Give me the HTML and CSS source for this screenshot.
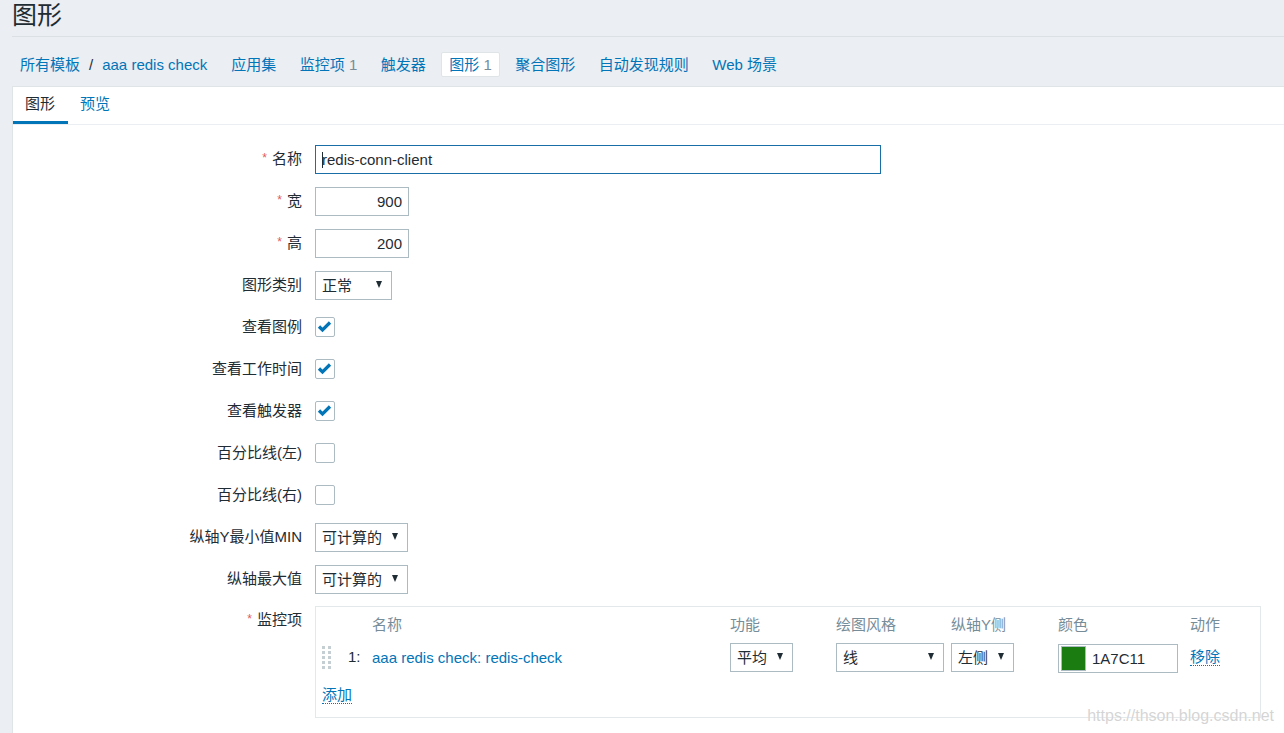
FILE: index.html
```html
<!DOCTYPE html>
<html lang="zh">
<head>
<meta charset="utf-8">
<title>图形</title>
<link rel="stylesheet" href="styles.css">
</head>
<body>
<header class="page-title"><h1>图形</h1></header>
<nav class="subnav">
  <span class="nav-item crumbs"><a>所有模板</a><span class="sep">/</span><a>aaa redis check</a></span>
  <a class="nav-item">应用集</a>
  <a class="nav-item">监控项 <span class="count">1</span></a>
  <a class="nav-item">触发器</a>
  <a class="nav-item selected">图形 <span class="count">1</span></a>
  <a class="nav-item">聚合图形</a>
  <a class="nav-item">自动发现规则</a>
  <a class="nav-item">Web 场景</a>
</nav>
<main class="panel">
  <div class="tabs">
    <span class="tab active">图形</span>
    <span class="tab">预览</span>
  </div>
  <div class="form">
    <div class="row">
      <label class="lbl"><span class="req">*</span>名称</label>
      <div class="field"><input class="input focused name-input" value="redis-conn-client" readonly><span class="caret-line"></span></div>
    </div>
    <div class="row">
      <label class="lbl"><span class="req">*</span>宽</label>
      <div class="field"><input class="input num-input" value="900" readonly></div>
    </div>
    <div class="row">
      <label class="lbl"><span class="req">*</span>高</label>
      <div class="field"><input class="input num-input" value="200" readonly></div>
    </div>
    <div class="row">
      <label class="lbl">图形类别</label>
      <div class="field"><div class="select w77"><span>正常</span><i class="arrow"></i></div></div>
    </div>
    <div class="row">
      <label class="lbl">查看图例</label>
      <div class="field"><span class="checkbox"><svg viewBox="0 0 18 18" width="18" height="18"><polyline points="3,8.5 6.5,12 14,4.5" fill="none" stroke="#0275b8" stroke-width="3.2"/></svg></span></div>
    </div>
    <div class="row">
      <label class="lbl">查看工作时间</label>
      <div class="field"><span class="checkbox"><svg viewBox="0 0 18 18" width="18" height="18"><polyline points="3,8.5 6.5,12 14,4.5" fill="none" stroke="#0275b8" stroke-width="3.2"/></svg></span></div>
    </div>
    <div class="row">
      <label class="lbl">查看触发器</label>
      <div class="field"><span class="checkbox"><svg viewBox="0 0 18 18" width="18" height="18"><polyline points="3,8.5 6.5,12 14,4.5" fill="none" stroke="#0275b8" stroke-width="3.2"/></svg></span></div>
    </div>
    <div class="row">
      <label class="lbl">百分比线(左)</label>
      <div class="field"><span class="checkbox"></span></div>
    </div>
    <div class="row">
      <label class="lbl">百分比线(右)</label>
      <div class="field"><span class="checkbox"></span></div>
    </div>
    <div class="row">
      <label class="lbl">纵轴Y最小值MIN</label>
      <div class="field"><div class="select w93"><span>可计算的</span><i class="arrow"></i></div></div>
    </div>
    <div class="row">
      <label class="lbl">纵轴最大值</label>
      <div class="field"><div class="select w93"><span>可计算的</span><i class="arrow"></i></div></div>
    </div>
    <div class="row row-top">
      <label class="lbl lbl-top"><span class="req">*</span>监控项</label>
      <div class="field">
        <div class="items">
          <div class="items-grid">
            <span></span><span></span>
            <span class="th">名称</span>
            <span class="th">功能</span>
            <span class="th">绘图风格</span>
            <span class="th">纵轴Y侧</span>
            <span class="th">颜色</span>
            <span class="th">动作</span>

            <span class="drag"><svg width="9" height="23" viewBox="0 0 9 23"><g fill="#c5ced3"><rect x="0" y="0" width="3" height="3"/><rect x="6" y="0" width="3" height="3"/><rect x="0" y="5" width="3" height="3"/><rect x="6" y="5" width="3" height="3"/><rect x="0" y="10" width="3" height="3"/><rect x="6" y="10" width="3" height="3"/><rect x="0" y="15" width="3" height="3"/><rect x="6" y="15" width="3" height="3"/><rect x="0" y="20" width="3" height="3"/><rect x="6" y="20" width="3" height="3"/></g></svg></span>
            <span class="num">1:</span>
            <a class="link">aaa redis check: redis-check</a>
            <div class="select w63"><span>平均</span><i class="arrow"></i></div>
            <div class="select w108"><span>线</span><i class="arrow"></i></div>
            <div class="select w63"><span>左侧</span><i class="arrow"></i></div>
            <div class="color-field"><span class="swatch"></span><span class="color-text">1A7C11</span></div>
            <a class="dotted">移除</a>
          </div>
          <a class="dotted add">添加</a>
        </div>
      </div>
    </div>
  </div>
</main>
<div class="watermark">https://thson.blog.csdn.net</div>
</body>
</html>
```
FILE: styles.css
```css
html, body {
  margin: 0;
  padding: 0;
}
body {
  background: #ebeef2;
  font-family: "Liberation Sans", "Noto Sans CJK SC", sans-serif;
  font-size: 15px;
  line-height: 18px;
  color: #1f2c33;
  overflow: hidden;
  height: 733px;
  position: relative;
}
a {
  color: #0275b8;
  text-decoration: none;
}

.page-title {
  margin-left: 12px;
  height: 36px;
  border-bottom: 1px solid #dbe0e4;
}
.page-title h1 {
  margin: 0;
  font-size: 25px;
  font-weight: normal;
  line-height: 30px;
  color: #1f2c33;
}

.subnav {
  display: flex;
  align-items: center;
  margin-left: 12px;
  padding: 15px 0 9px;
}
.nav-item {
  box-sizing: border-box;
  height: 25px;
  line-height: 23px;
  padding: 0 7px;
  margin-right: 7.5px;
  border: 1px solid transparent;
  border-radius: 2px;
  color: #0275b8;
  white-space: nowrap;
}
.nav-item.selected {
  background: #fff;
  border-color: #dfe4e7;
}
.crumbs {
  margin-right: 8px;
}
.crumbs .sep {
  color: #1f2c33;
  margin: 0 9px;
}
.count {
  color: #768d99;
}

.panel {
  margin-left: 12px;
  background: #fff;
  border-left: 1px solid #dfe4e7;
  border-top: 1px solid #dfe4e7;
  min-height: 700px;
}
.tabs {
  display: flex;
  border-bottom: 1px solid #ebeef2;
}
.tab {
  padding: 0 12px;
  line-height: 34px;
  border-bottom: 3px solid transparent;
  color: #0275b8;
}
.tab.active {
  color: #1f2c33;
  border-bottom-color: #0275b8;
  padding-right: 13px;
}

.form {
  padding-top: 13px;
}
.row {
  display: grid;
  grid-template-columns: 289px 1fr;
  column-gap: 13px;
  align-items: center;
  min-height: 42px;
}
.row-top {
  align-items: start;
}
.lbl {
  text-align: right;
  white-space: nowrap;
}
.lbl-top {
  padding-top: 11px;
}
.req {
  color: #e45959;
  font-size: 12px;
  margin-right: 5px;
  position: relative;
  top: -2px;
}
.field {
  display: flex;
  align-items: center;
  position: relative;
}

.input {
  box-sizing: border-box;
  height: 29px;
  border: 1px solid #acbbc2;
  border-radius: 0;
  padding: 0 6px;
  font-family: inherit;
  font-size: 15px;
  color: #1f2c33;
  background: #fff;
  outline: none;
  margin: 0;
}
.name-input {
  width: 566px;
  height: 29px;
  border-color: #1a6ea8;
}
.caret-line {
  position: absolute;
  left: 7px;
  top: 7px;
  width: 1px;
  height: 16px;
  background: #1f2c33;
}
.num-input {
  width: 94px;
  text-align: right;
}

.select {
  box-sizing: border-box;
  height: 29px;
  border: 1px solid #acbbc2;
  background: #fff;
  display: flex;
  align-items: center;
  justify-content: space-between;
  padding: 1px 9px 0 6px;
  color: #1f2c33;
}
.arrow {
  width: 0;
  height: 0;
  border-left: 3.5px solid transparent;
  border-right: 3.5px solid transparent;
  border-top: 7px solid #1f2c33;
  margin-top: -2px;
}
.w77 { width: 77px; }
.w93 { width: 93px; }
.w63 { width: 63px; }
.w108 { width: 108px; }

.checkbox {
  box-sizing: border-box;
  width: 20px;
  height: 20px;
  border: 1px solid #acbbc2;
  border-radius: 2px;
  background: #fff;
  display: flex;
  align-items: center;
  justify-content: center;
}
.checkbox svg {
  display: block;
}

.items {
  box-sizing: border-box;
  width: 946px;
  margin-top: 6px;
  border: 1px solid #e3e8eb;
  padding: 0 0 13px 6px;
}
.items-grid {
  display: grid;
  grid-template-columns: 26px 24px 358px 106px 115px 107px 132px 1fr;
  grid-template-rows: 35px 30px;
  align-items: center;
}
.th {
  color: #768d99;
}
.drag {
  display: flex;
  align-items: center;
}
.drag svg {
  display: block;
}
.num {
  color: #1f2c33;
}
.link {
  color: #0275b8;
  white-space: nowrap;
  padding-top: 2px;
}
.color-field {
  box-sizing: border-box;
  width: 120px;
  height: 29px;
  border: 1px solid #acbbc2;
  display: flex;
  align-items: center;
  padding-left: 2px;
  margin-top: 3px;
}
.swatch {
  box-sizing: border-box;
  width: 25px;
  height: 25px;
  background: #1a7c11;
  border: 1px solid #acbbc2;
  margin-right: 6px;
}
.color-text {
  color: #1f2c33;
}
.dotted {
  color: #0275b8;
  border-bottom: 1px dotted #0275b8;
  justify-self: start;
  line-height: 17px;
}
.add {
  display: inline-block;
  margin-top: 14px;
}

.watermark {
  position: absolute;
  right: 10px;
  bottom: 8px;
  font-size: 16px;
  line-height: 18px;
  color: rgba(205, 205, 205, 0.85);
  text-shadow: 0 0 1px rgba(255, 255, 255, 0.9);
  white-space: nowrap;
}
```
